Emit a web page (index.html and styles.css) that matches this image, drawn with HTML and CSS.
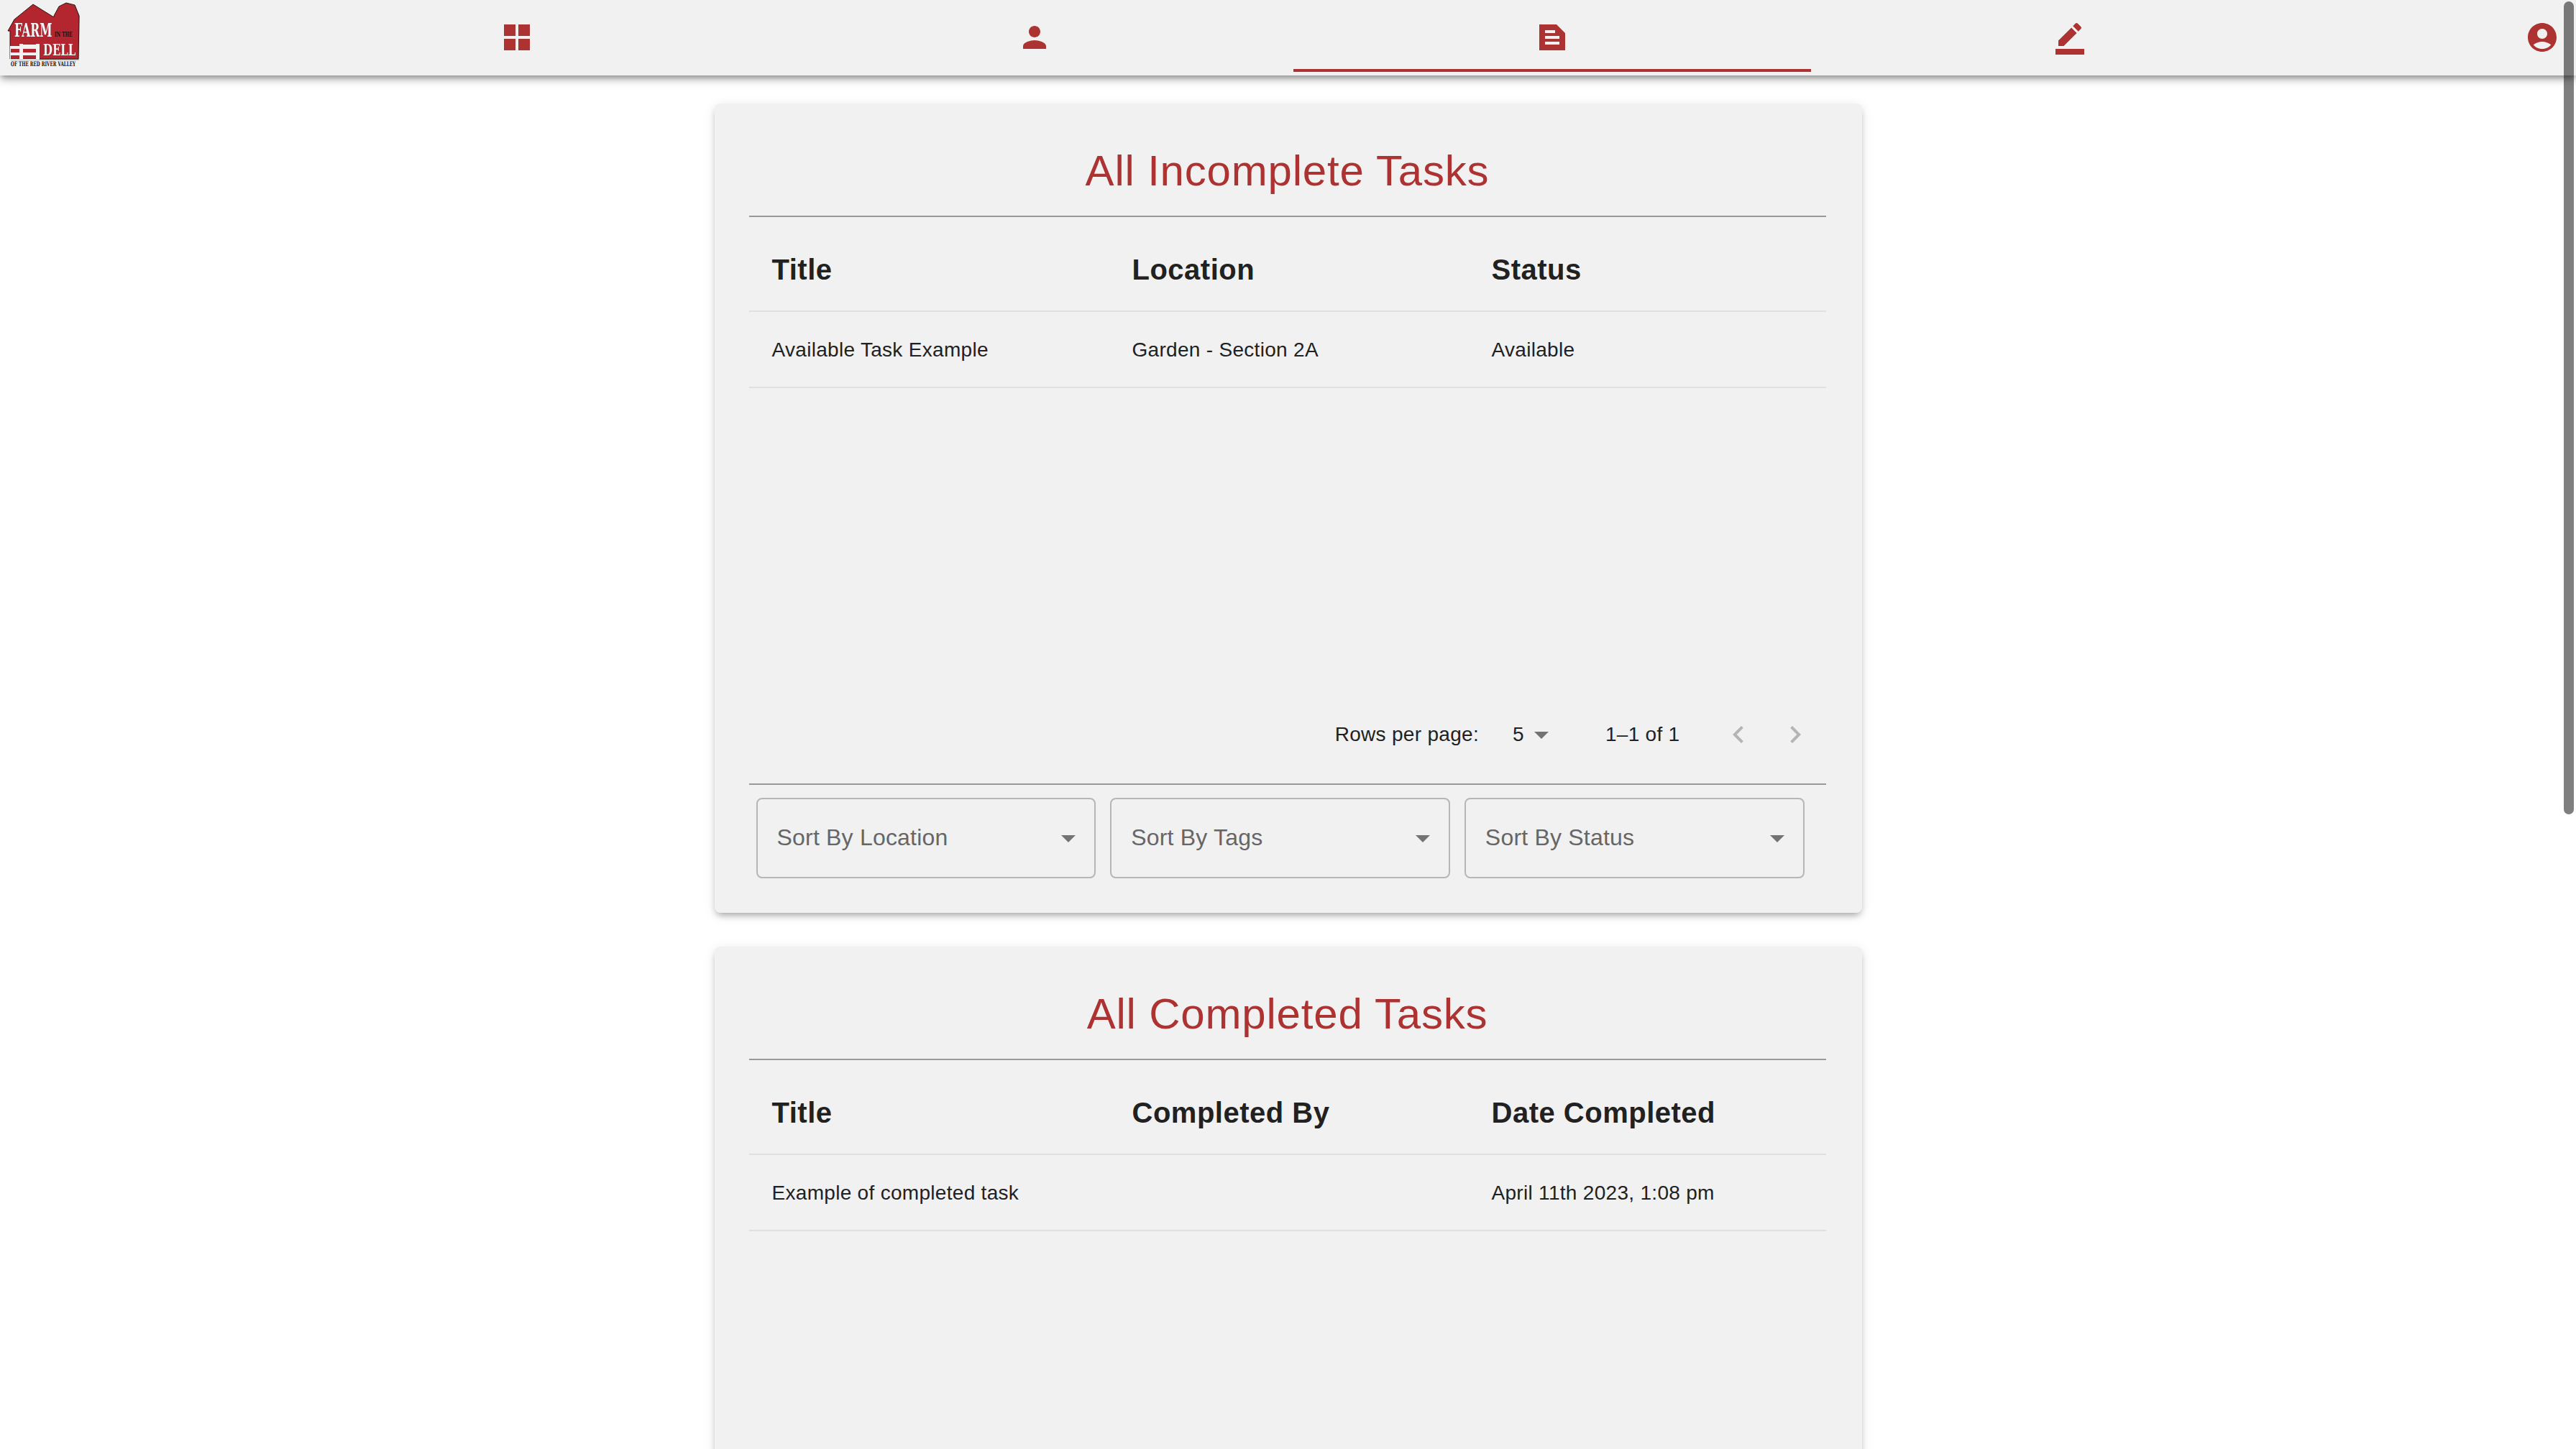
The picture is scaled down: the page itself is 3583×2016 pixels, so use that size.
FILE: index.html
```html
<!DOCTYPE html>
<html lang="en">
<head>
<meta charset="utf-8">
<title>Farm in the Dell - Tasks</title>
<link rel="stylesheet" href="styles.css">
</head>
<body>
<header class="topbar">
  <div class="brand">
    <svg class="logo" viewBox="0 0 116 100" width="116" height="100" role="img" aria-label="Farm in the Dell of the Red River Valley">
      <path class="logo-shadow" d="M12 44 21 28 46 7 76 25 83 10 93 5 105 8 111 23 110 84H15V44Z"/>
      <path class="logo-barn" d="M11 43 20 27 46 6 75 24 V22L82 9 92 4 104 7 110 22 109 82H14V43Z"/>
      <path class="logo-white" fill-rule="evenodd" d="M14 64H27V61H32V62H50V61H55V83H14ZM15 68V73H27V68ZM32 68V73H50V68ZM15 77V82H27V77ZM32 77V82H50V77Z"/>
      <text class="logo-big logo-farm" transform="translate(20 51) scale(.6 1)">FARM</text>
      <text class="logo-big logo-dell" transform="translate(60 77) scale(.65 1)">DELL</text>
      <text class="logo-small" transform="translate(76 51) scale(.62 1)">IN THE</text>
      <text class="logo-tag" transform="translate(15 91.5) scale(.63 1)">OF THE RED RIVER VALLEY</text>
    </svg>
  </div>
  <nav class="tabs">
    <a class="tab"><svg class="icon" viewBox="0 0 24 24"><path d="M3 3h8v8H3zM13 3h8v8h-8zM3 13h8v8H3zM13 13h8v8h-8z"/></svg></a>
    <a class="tab"><svg class="icon" viewBox="0 0 24 24"><path d="M12 12c2.21 0 4-1.79 4-4s-1.79-4-4-4-4 1.79-4 4 1.79 4 4 4zm0 2c-2.67 0-8 1.34-8 4v2h16v-2c0-2.66-5.33-4-8-4z"/></svg></a>
    <a class="tab tab-active"><svg class="icon" viewBox="0 0 24 24"><path d="M15 3H3v18h18V9l-6-6zM7 7h7v2H7V7zm10 10H7v-2h10v2zm0-4H7v-2h10v2z"/></svg></a>
    <a class="tab"><svg class="icon" viewBox="0 0 24 24"><path d="M22 24H2v-4h20v4zM13.06 5.19l3.75 3.75L7.75 18H4v-3.75l9.06-9.06zm4.82 2.68-3.75-3.75 1.83-1.83c.39-.39 1.02-.39 1.41 0l2.34 2.34c.39.39.39 1.02 0 1.41l-1.83 1.83z"/></svg></a>
  </nav>
  <div class="account"><svg class="icon" viewBox="0 0 24 24"><path d="M12 2C6.48 2 2 6.48 2 12s4.48 10 10 10 10-4.48 10-10S17.52 2 12 2zm0 4c1.93 0 3.5 1.57 3.5 3.5S13.93 13 12 13s-3.5-1.57-3.5-3.5S10.07 6 12 6zm0 14c-2.03 0-4.43-.82-6.14-2.88C7.55 15.8 9.68 15 12 15s4.45.8 6.14 2.12C16.43 19.18 14.03 20 12 20z"/></svg></div>
</header>

<main class="page">
  <section class="card">
    <h1 class="card-title">All Incomplete Tasks</h1>
    <div class="table-area">
      <table class="data">
        <thead><tr><th>Title</th><th>Location</th><th>Status</th></tr></thead>
        <tbody><tr><td>Available Task Example</td><td>Garden - Section 2A</td><td>Available</td></tr></tbody>
      </table>
    </div>
    <div class="pager">
      <span>Rows per page:</span>
      <span class="pager-size">5</span>
      <svg class="icon icon-grey" viewBox="0 0 24 24"><path d="M7 10l5 5 5-5z"/></svg>
      <span class="pager-count">1–1 of 1</span>
      <svg class="icon icon-faint pager-prev" viewBox="0 0 24 24"><path d="M15.41 7.41 14 6l-6 6 6 6 1.41-1.41L10.83 12z"/></svg>
      <svg class="icon icon-faint pager-next" viewBox="0 0 24 24"><path d="M10 6 8.59 7.41 13.17 12l-4.58 4.58L10 18l6-6z"/></svg>
    </div>
    <div class="filters">
      <div class="select"><span class="select-label">Sort By Location</span><svg class="icon icon-grey" viewBox="0 0 24 24"><path d="M7 10l5 5 5-5z"/></svg></div>
      <div class="select"><span class="select-label">Sort By Tags</span><svg class="icon icon-grey" viewBox="0 0 24 24"><path d="M7 10l5 5 5-5z"/></svg></div>
      <div class="select"><span class="select-label">Sort By Status</span><svg class="icon icon-grey" viewBox="0 0 24 24"><path d="M7 10l5 5 5-5z"/></svg></div>
    </div>
  </section>

  <section class="card">
    <h1 class="card-title">All Completed Tasks</h1>
    <div class="table-area">
      <table class="data">
        <thead><tr><th>Title</th><th>Completed By</th><th>Date Completed</th></tr></thead>
        <tbody><tr><td>Example of completed task</td><td></td><td>April 11th 2023, 1:08 pm</td></tr></tbody>
      </table>
    </div>
  </section>
</main>
<div class="scroll-thumb"></div>
</body>
</html>
```
FILE: styles.css
```css
html, body {
  margin: 0;
  height: 100%;
  overflow: hidden;
  background: #fff;
}
body {
  font-family: "Liberation Sans", Arial, sans-serif;
  color: #212121;
}
.topbar {
  position: relative;
  z-index: 2;
  display: flex;
  height: 105px;
  background: #f1f1f1;
  box-shadow: 0 4px 8px -2px rgba(0,0,0,.4), 0 8px 10px 0 rgba(0,0,0,.12), 0 2px 20px 0 rgba(0,0,0,.08);
}
.brand { width: 359px; flex: none; }
.logo { display: block; }
.logo-shadow { fill: #9a9a9a; opacity: .6; }
.logo-barn { fill: #b3262f; stroke: #2a1414; stroke-width: 1; stroke-linejoin: round; }
.logo-white { fill: #f2f2f2; }
.logo-big {
  font-family: "DejaVu Serif", serif;
  font-weight: 700;
  fill: #f6f6f6;
  filter: drop-shadow(.6px .6px 0 #5a4444);
}
.logo-farm { font-size: 26px; }
.logo-dell { font-size: 23px; }
.logo-small, .logo-tag {
  font-family: "DejaVu Serif", serif;
  font-weight: 700;
  fill: #1c1010;
}
.logo-small { font-size: 9.5px; }
.logo-tag { font-size: 9px; }
.tabs { display: flex; flex: none; }
.tab {
  box-sizing: border-box;
  width: 720px;
  height: 100px;
  padding-top: 28px;
  display: flex;
  justify-content: center;
  border-bottom: 4px solid transparent;
}
.tab-active { border-bottom-color: #ad3333; }
.icon {
  display: block;
  width: 48px;
  height: 48px;
  flex: none;
  fill: #ad3333;
}
.account {
  flex: 1;
  display: flex;
  justify-content: flex-end;
  padding: 28px 23px 0 0;
}
.icon-grey { fill: #737373; }
.icon-faint { fill: #b4b4b4; }

.page { padding-top: 39px; }
.card {
  box-sizing: border-box;
  width: 1596px;
  margin: 0 auto 47px;
  padding: 0 50px 48px 48px;
  background: #f1f1f1;
  border-radius: 8px;
  box-shadow: 0 6px 10px -3px rgba(0,0,0,.3), 0 3px 16px 0 rgba(0,0,0,.1);
}
.card-title {
  box-sizing: border-box;
  height: 158px;
  margin: 0;
  padding-top: 57px;
  border-bottom: 2px solid #999;
  font-size: 60px;
  font-weight: 400;
  line-height: 74px;
  letter-spacing: .8px;
  text-align: center;
  color: #ad3333;
}
.table-area { height: 667px; }
.data {
  width: 100%;
  table-layout: fixed;
  border-collapse: separate;
  border-spacing: 0;
}
.data th:first-child, .data td:first-child { width: 501px; }
.data th:nth-child(2), .data td:nth-child(2) { width: 500px; }
.data th, .data td {
  box-sizing: border-box;
  padding: 0 32px;
  text-align: left;
  border-bottom: 2px solid #e0e0e0;
}
.data th {
  height: 132px;
  padding-top: 16px;
  font-size: 40px;
  font-weight: 700;
  letter-spacing: .5px;
}
.data td {
  height: 106px;
  padding-top: 2px;
  font-size: 28px;
  letter-spacing: .3px;
}
.pager {
  box-sizing: border-box;
  display: flex;
  align-items: center;
  justify-content: flex-end;
  height: 104px;
  margin-bottom: 17px;
  padding: 2px 1px 0 0;
  font-size: 28px;
  letter-spacing: .3px;
}
.pager-size { margin-left: 47px; }
.pager-count { margin: 0 57px 0 65px; }
.pager-prev { margin-right: 31px; }
.pager-next { margin-right: 18px; }
.filters {
  display: flex;
  gap: 20px;
  padding: 18px 30px 0 10px;
  border-top: 2px solid #999;
}
.select {
  box-sizing: border-box;
  flex: 1;
  height: 112px;
  display: flex;
  align-items: center;
  justify-content: space-between;
  padding: 0 12px 0 27px;
  border: 2px solid #b6b6b6;
  border-radius: 8px;
  font-size: 32px;
  letter-spacing: .2px;
  color: #666;
}
.select-label { padding-bottom: 2px; }
.scroll-thumb {
  position: fixed;
  z-index: 3;
  top: 2px;
  right: 3px;
  width: 14px;
  height: 1131px;
  border-radius: 7px;
  background: rgba(0,0,0,.5);
}
```
